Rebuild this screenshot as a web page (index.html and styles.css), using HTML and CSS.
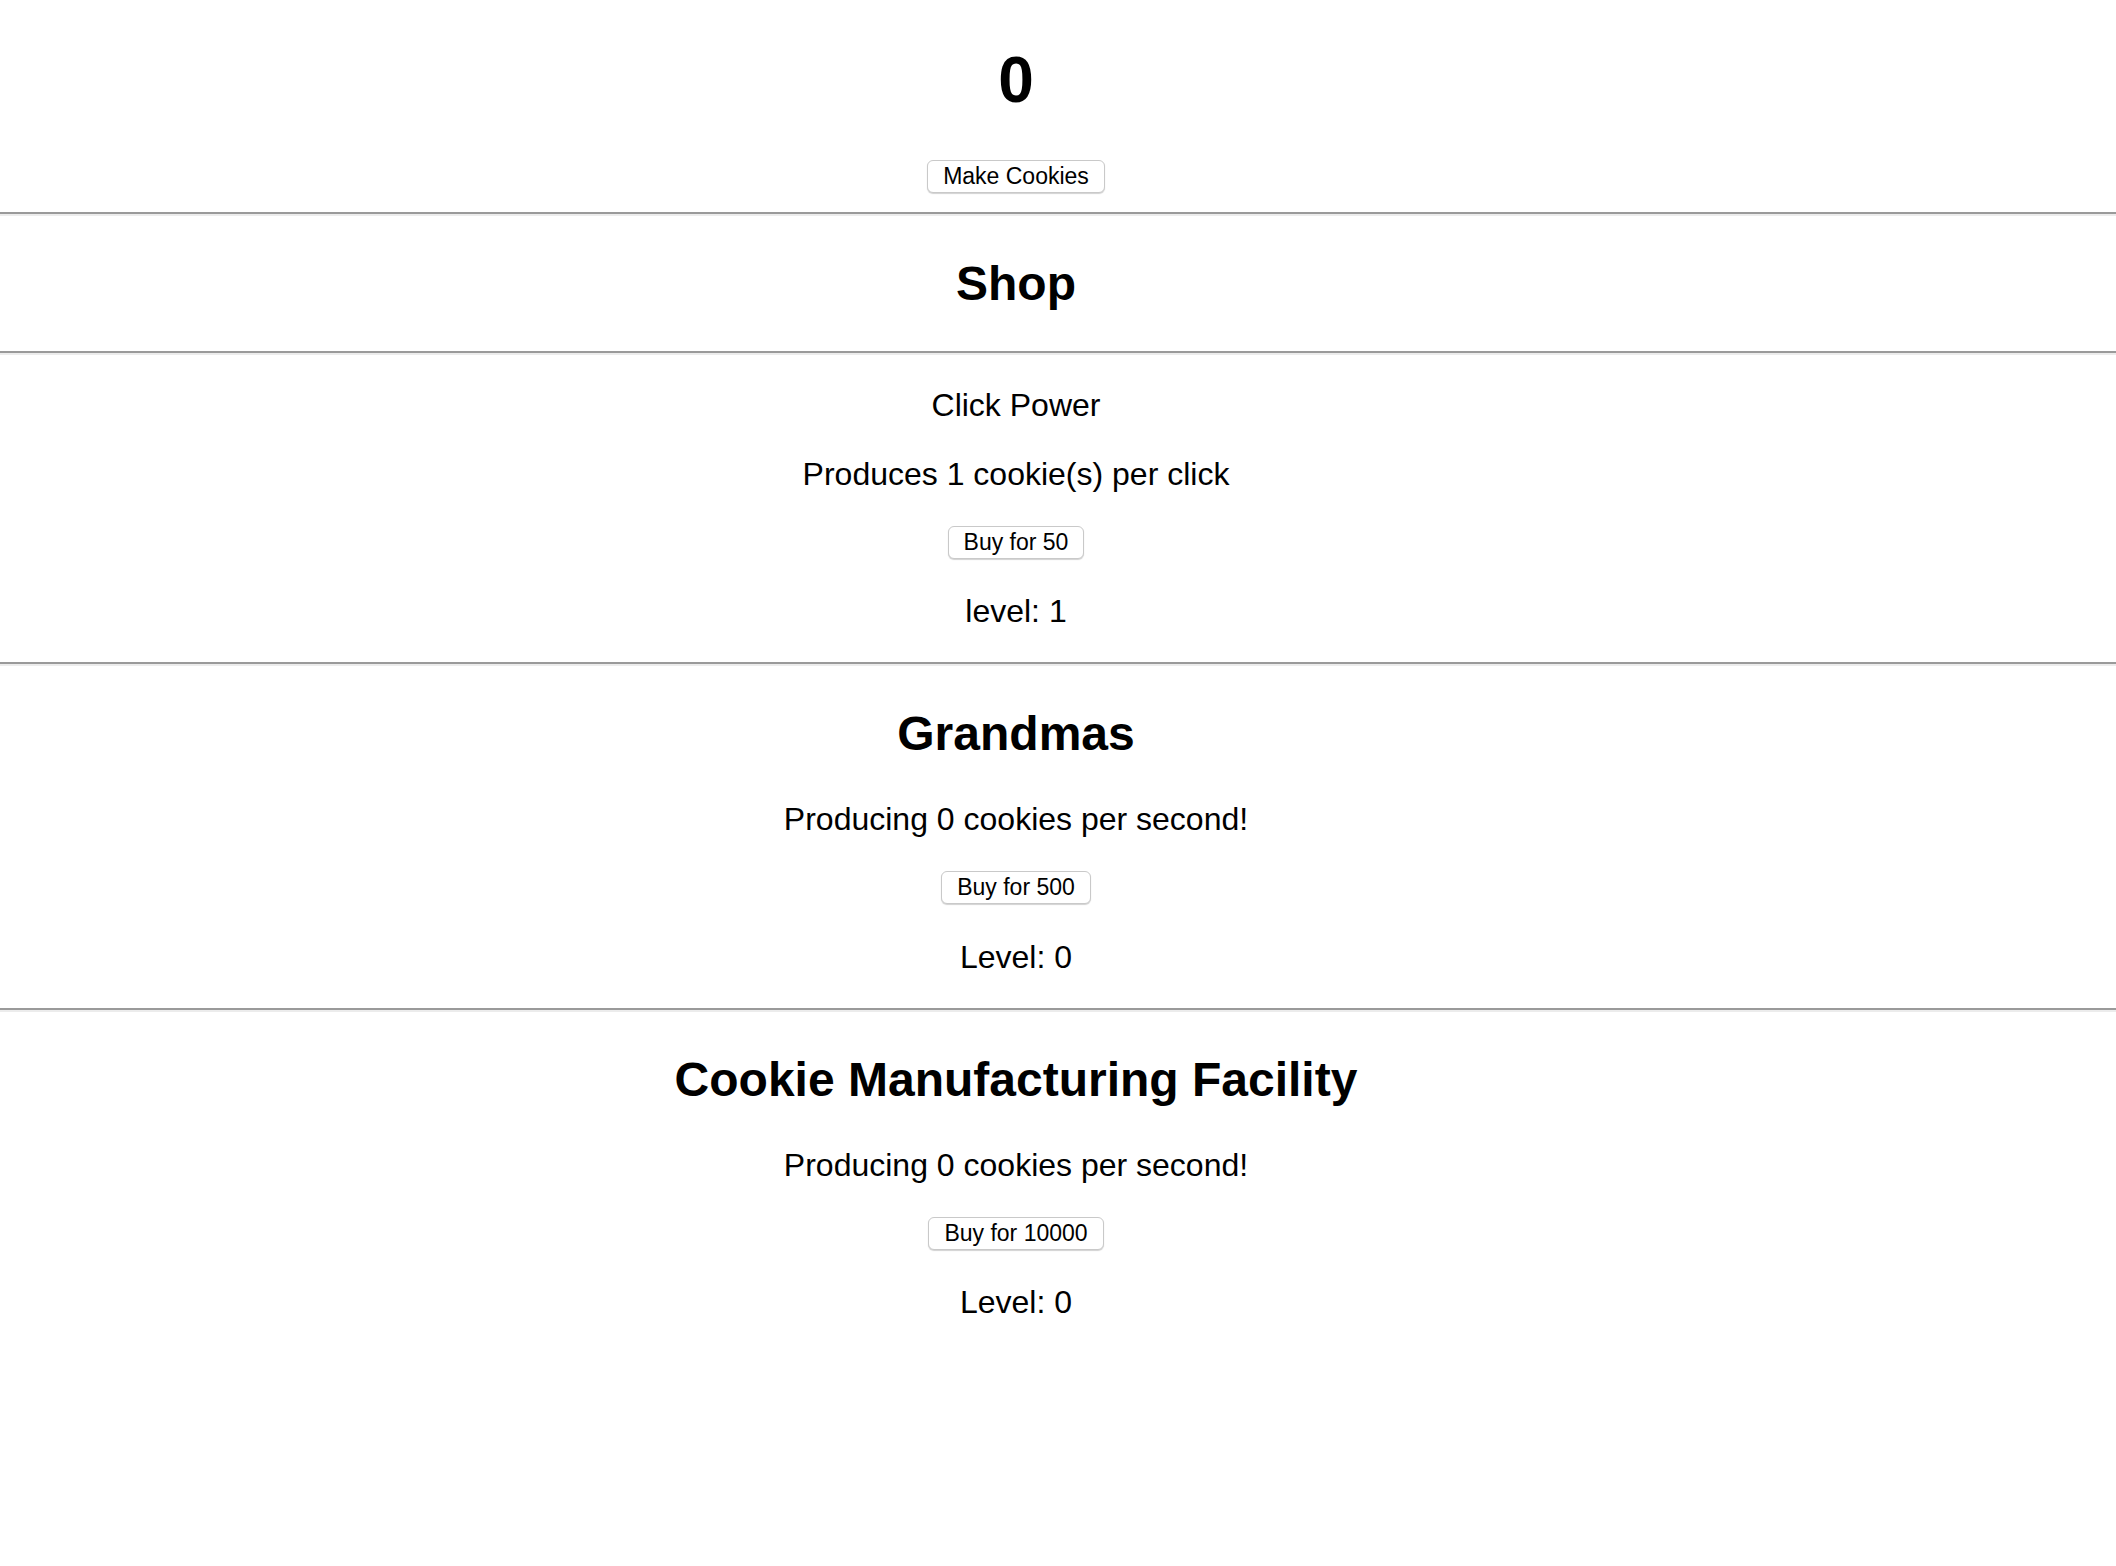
FILE: index.html
```html
<!DOCTYPE html>
<html lang="en">
<head>
<meta charset="utf-8">
<title>Cookie Clicker</title>
<link rel="stylesheet" href="styles.css">
</head>
<body>
<main class="game">
  <header class="block">
    <h1 class="count">0</h1>
    <div class="btn-row"><button class="btn">Make Cookies</button></div>
  </header>
  <hr class="rule">
  <h2 class="title block">Shop</h2>
  <hr class="rule">
  <section class="block">
    <p class="text">Click Power</p>
    <p class="text">Produces 1 cookie(s) per click</p>
    <div class="btn-row"><button class="btn">Buy for 50</button></div>
    <p class="text">level: 1</p>
  </section>
  <hr class="rule">
  <section class="block">
    <h2 class="title">Grandmas</h2>
    <p class="text">Producing 0 cookies per second!</p>
    <div class="btn-row"><button class="btn">Buy for 500</button></div>
    <p class="text">Level: 0</p>
  </section>
  <hr class="rule">
  <section class="block">
    <h2 class="title">Cookie Manufacturing Facility</h2>
    <p class="text">Producing 0 cookies per second!</p>
    <div class="btn-row"><button class="btn">Buy for 10000</button></div>
    <p class="text">Level: 0</p>
  </section>
</main>
</body>
</html>
```
FILE: styles.css
```css
html, body {
  background: #ffffff;
}
body {
  margin: 0;
  color: #000000;
  font-family: "Liberation Sans", Arial, Helvetica, sans-serif;
  font-size: 32px;
  line-height: 37px;
  text-align: center;
}
.block {
  padding-right: 84px;
}
.count {
  margin: 42.5px 0;
  font-size: 64px;
  line-height: 74px;
  font-weight: bold;
}
.title {
  margin: 40px 0;
  font-size: 48px;
  line-height: 55px;
  font-weight: bold;
}
.text {
  margin: 32px 0;
  font-size: 32px;
  line-height: 37px;
}
.btn-row {
  height: 36.5px;
}
.btn {
  display: inline-block;
  vertical-align: top;
  margin-top: 1px;
  height: 33px;
  box-sizing: border-box;
  padding: 0 15px;
  font-family: "Liberation Sans", Arial, Helvetica, sans-serif;
  font-size: 23px;
  line-height: 29px;
  color: #000000;
  background: #ffffff;
  border: 1px solid #c9c9c9;
  border-radius: 6px;
  box-shadow: 0 1px 1px rgba(0, 0, 0, 0.18);
}
.rule {
  margin: 16px 0;
  height: 0;
  border: none;
  border-top: 2px solid #9a9a9a;
  border-bottom: 2px solid #ececec;
}
```
